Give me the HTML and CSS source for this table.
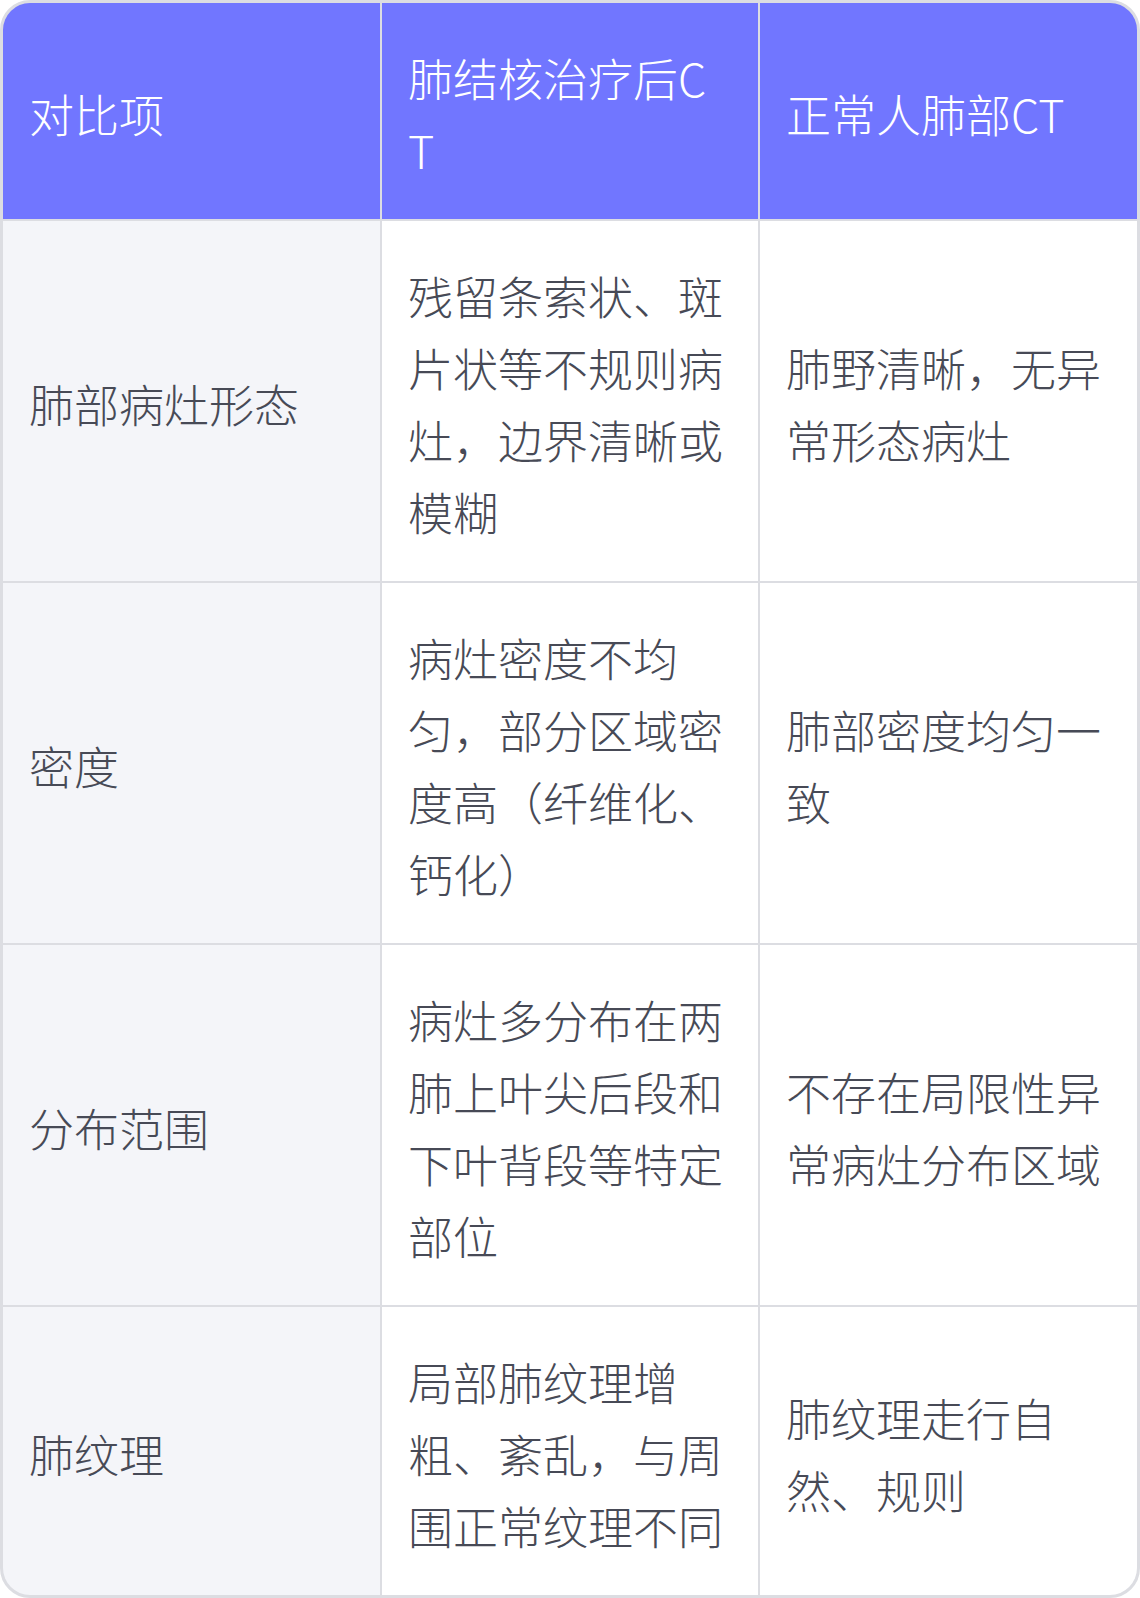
FILE: index.html
```html
<!DOCTYPE html>
<html lang="zh-CN">
<head>
<meta charset="utf-8">
<link rel="stylesheet" href="styles.css">
</head>
<body>
<div class="table">
  <div class="cell head">对比项</div>
  <div class="cell head">肺结核治疗后CT</div>
  <div class="cell head">正常人肺部CT</div>

  <div class="cell first">肺部病灶形态</div>
  <div class="cell">残留条索状、斑片状等不规则病灶，边界清晰或模糊</div>
  <div class="cell">肺野清晰，无异常形态病灶</div>

  <div class="cell first">密度</div>
  <div class="cell">病灶密度不均匀，部分区域密度高（纤维化、钙化）</div>
  <div class="cell">肺部密度均匀一致</div>

  <div class="cell first">分布范围</div>
  <div class="cell">病灶多分布在两肺上叶尖后段和下叶背段等特定部位</div>
  <div class="cell">不存在局限性异常病灶分布区域</div>

  <div class="cell first">肺纹理</div>
  <div class="cell">局部肺纹理增粗、紊乱，与周围正常纹理不同</div>
  <div class="cell">肺纹理走行自然、规则</div>
</div>
</body>
</html>
```

FILE: styles.css
```css
html, body {
  margin: 0;
  padding: 0;
  background: #ffffff;
}

.table {
  width: 1140px;
  box-sizing: border-box;
  border: 3px solid #dcdde2;
  border-radius: 30px;
  overflow: hidden;
  display: grid;
  grid-template-columns: 377px 376px 377px;
  gap: 2px;
  background: #dcdde2;
  font-family: "Noto Sans CJK SC", "Noto Sans", sans-serif;
  font-weight: 300;
  font-size: 45px;
  line-height: 72px;
  color: #474a56;
}

.cell {
  background: #ffffff;
  padding: 39px 28px 33px 26px;
  display: flex;
  align-items: center;
  word-break: break-all;
}

.cell.head {
  background: #7176ff;
  color: #ffffff;
}

.cell.first {
  background: #f4f5f9;
}
```
